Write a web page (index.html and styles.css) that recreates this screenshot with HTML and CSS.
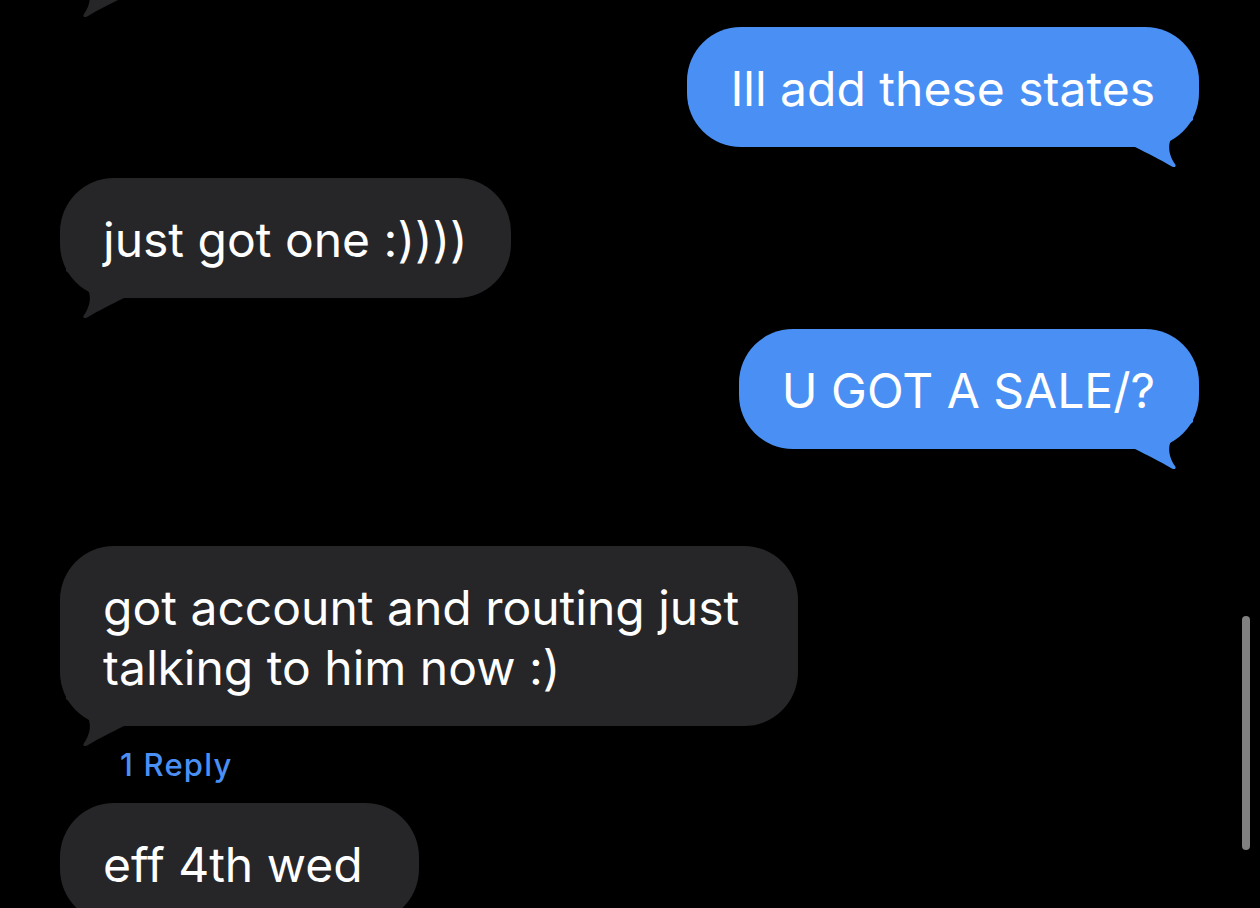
FILE: index.html
```html
<!DOCTYPE html>
<html lang="en">
<head>
<meta charset="utf-8">
<title>Messages</title>
<link rel="stylesheet" href="styles.css">
</head>
<body>
<main class="thread">
  <div class="msg in first">
    <div class="bubble ghost"></div>
    <svg class="tail" viewBox="0 0 70 60" width="70" height="60" aria-hidden="true"><path d="M6 40 C18 46 32 53 42 59 C45 61 48 60 46 57 C41 50 38 40 42 32 C46 25 56 20 64 13 L64 0 L6 0 Z"/></svg>
  </div>
  <div class="msg out gap-a">
    <div class="bubble">Ill add these states</div>
    <svg class="tail" viewBox="0 0 70 60" width="70" height="60" aria-hidden="true"><path d="M6 40 C18 46 32 53 42 59 C45 61 48 60 46 57 C41 50 38 40 42 32 C46 25 56 20 64 13 L64 0 L6 0 Z"/></svg>
  </div>
  <div class="msg in gap-b">
    <div class="bubble">just got one :))))</div>
    <svg class="tail" viewBox="0 0 70 60" width="70" height="60" aria-hidden="true"><path d="M6 40 C18 46 32 53 42 59 C45 61 48 60 46 57 C41 50 38 40 42 32 C46 25 56 20 64 13 L64 0 L6 0 Z"/></svg>
  </div>
  <div class="msg out gap-b">
    <div class="bubble">U GOT A SALE/?</div>
    <svg class="tail" viewBox="0 0 70 60" width="70" height="60" aria-hidden="true"><path d="M6 40 C18 46 32 53 42 59 C45 61 48 60 46 57 C41 50 38 40 42 32 C46 25 56 20 64 13 L64 0 L6 0 Z"/></svg>
  </div>
  <div class="msg in gap-c">
    <div class="bubble wide">got account and routing just talking to him now :)</div>
    <svg class="tail" viewBox="0 0 70 60" width="70" height="60" aria-hidden="true"><path d="M6 40 C18 46 32 53 42 59 C45 61 48 60 46 57 C41 50 38 40 42 32 C46 25 56 20 64 13 L64 0 L6 0 Z"/></svg>
  </div>
  <div class="reply">1 Reply</div>
  <div class="msg in gap-d">
    <div class="bubble last">eff 4th wed</div>
  </div>
</main>
<div class="scrollbar"></div>
</body>
</html>
```
FILE: styles.css
```css
html, body {
  margin: 0;
  padding: 0;
  background: #000;
  height: 100%;
  overflow: hidden;
}

body {
  position: relative;
  font-family: Inter, "Noto Sans", "Liberation Sans", sans-serif;
  color: #fff;
}

.thread {
  display: flex;
  flex-direction: column;
  padding: 0 61px 0 60px;
}

.msg {
  position: relative;
  display: flex;
}

.msg.in { align-self: flex-start; }
.msg.out { align-self: flex-end; }

.first { margin-top: -123px; }
.gap-a { margin-top: 30px; }
.gap-b { margin-top: 31px; }
.gap-c { margin-top: 97px; }
.gap-d { margin-top: 18px; }

.bubble {
  position: relative;
  z-index: 2;
  font-size: 48px;
  line-height: 60px;
  padding: 32px 44px 28px 43px;
  border-radius: 54px;
  white-space: nowrap;
}

.bubble.ghost {
  width: 300px;
  height: 120px;
  padding: 0;
  box-sizing: border-box;
}

.bubble.wide {
  white-space: normal;
  max-width: 651px;
}

.bubble.last {
  padding-right: 56px;
}

.in .bubble { background: #262629; }
.out .bubble { background: #4a90f4; }

.tail {
  position: absolute;
  bottom: -20px;
  z-index: 1;
  display: block;
}

.out .tail {
  right: 0;
  fill: #4a90f4;
}

.in .tail {
  left: 0;
  fill: #262629;
  transform: scaleX(-1);
}

.reply {
  margin-top: 19px;
  padding-left: 60px;
  font-size: 31px;
  line-height: 40px;
  font-weight: 500;
  letter-spacing: 1.2px;
  color: #4a90f4;
}

.scrollbar {
  position: absolute;
  left: 1242px;
  top: 616px;
  width: 8px;
  height: 234px;
  border-radius: 4px;
  background: #808080;
}
```
